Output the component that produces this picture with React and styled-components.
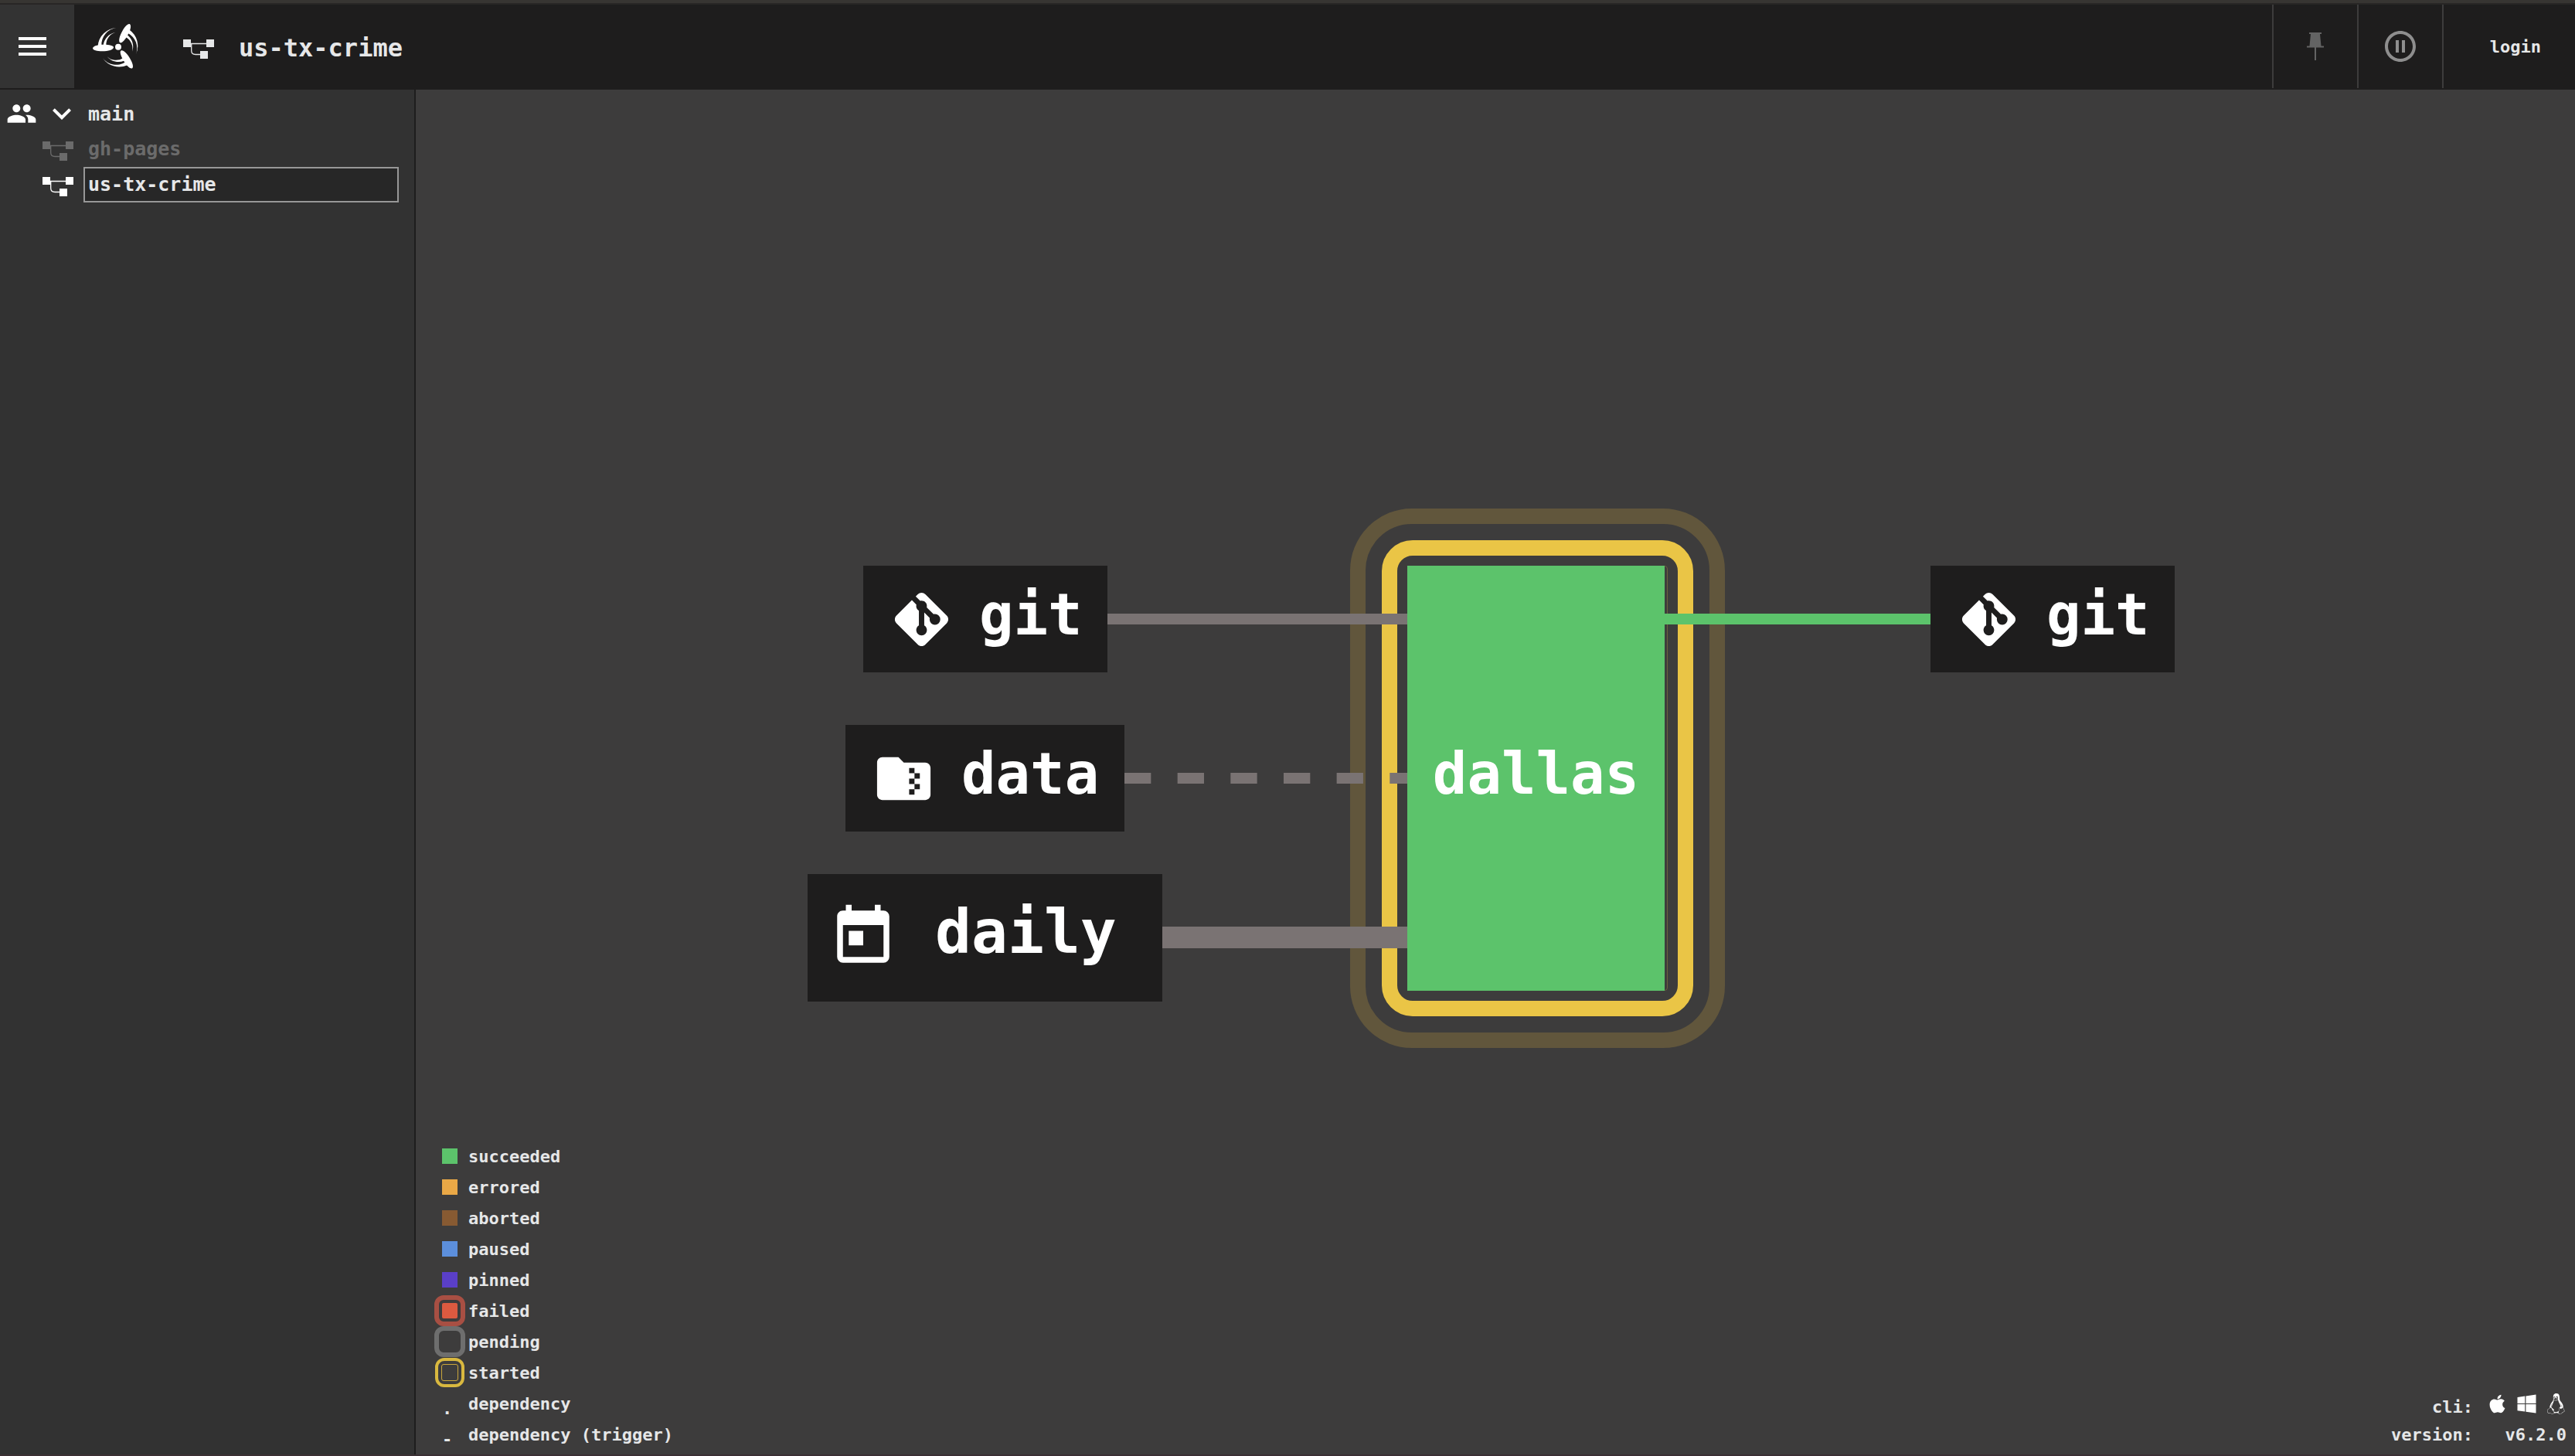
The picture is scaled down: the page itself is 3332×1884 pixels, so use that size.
import React from "react";
import styled, { createGlobalStyle } from "styled-components";
import { MdMenu, MdPeople, MdExpandMore, MdPauseCircleOutline } from "react-icons/md";
import { FaApple, FaLinux } from "react-icons/fa";

const color = {
  bar: "#1e1d1d",
  canvas: "#3d3c3c",
  sidebar: "#323232",
  text: "#e6e7e8",
  succeeded: "#5cc36b",
  started: "#eac546",
  edge: "#7a7373",
};

const GlobalStyle = createGlobalStyle`
  * { box-sizing: border-box; }
  body {
    margin: 0;
    background: ${color.canvas};
    color: ${color.text};
    font-family: "DejaVu Sans Mono", monospace;
    font-weight: 700;
  }
  a { color: inherit; text-decoration: none; }
  svg { display: block; flex: none; }
`;

const Page = styled.div`
  display: flex;
  flex-direction: column;
  height: 100vh;
  border-bottom: 2px solid #3b3034;
`;

const WindowEdge = styled.div`
  height: 6px;
  background: #373532;
  border-bottom: 2px solid #282625;
`;

const TopBar = styled.header`
  display: flex;
  height: 110px;
  background: ${color.bar};
  border-bottom: 2px solid ${color.bar};
`;

const MenuButton = styled.button`
  display: flex;
  align-items: center;
  width: 96px;
  padding: 0 18px;
  border: 0;
  background: #333333;
  color: #ffffff;
`;

const LogoLink = styled.a`
  display: flex;
  align-items: center;
  padding: 0 23px;
`;

const Breadcrumb = styled.a`
  display: flex;
  align-items: center;
  gap: 31px;
  padding: 3px 0 0 33px;
  font-size: 32px;
  line-height: 40px;
`;

const Actions = styled.div`
  display: flex;
  margin-left: auto;
`;

const ActionButton = styled.button`
  display: flex;
  align-items: center;
  justify-content: center;
  width: 110px;
  padding: 0;
  border: 0;
  border-left: 2px solid #3d3c3c;
  background: transparent;
  color: ${(p) => p.$tone};
`;

const LoginLink = styled.a`
  display: flex;
  align-items: center;
  padding: 0 44px 0 60px;
  border-left: 2px solid #3d3c3c;
  font-size: 22px;
`;

const Body = styled.div`
  display: flex;
  flex: 1;
  min-height: 0;
`;

const Sidebar = styled.nav`
  flex: none;
  width: 538px;
  padding: 8px 20px 0 8px;
  background: ${color.sidebar};
  border-right: 2px solid ${color.bar};
  font-size: 25px;
`;

const TeamButton = styled.button`
  display: flex;
  align-items: center;
  gap: 8px;
  height: 46px;
  padding: 0;
  border: 0;
  background: transparent;
  color: #ffffff;
  font: inherit;
`;

const TeamName = styled.span`
  margin-left: 2px;
  color: ${color.text};
`;

const PipelineList = styled.ul`
  margin: 0;
  padding: 0 0 0 47px;
  list-style: none;
`;

const PipelineLink = styled.a`
  display: flex;
  align-items: center;
  gap: 12px;
  color: ${(p) => (p.$dim ? "#6b6b6b" : "#ffffff")};
`;

const PipelineName = styled.span`
  flex: 1;
  height: 46px;
  padding: 0 4px;
  border: 2px solid ${(p) => (p.$selected ? "#979797" : "transparent")};
  background: ${(p) => (p.$selected ? "#272727" : "transparent")};
  color: ${(p) => (p.$dim ? "#6b6b6b" : color.text)};
  line-height: 42px;
`;

const Canvas = styled.main`
  position: relative;
  display: flex;
  align-items: center;
  justify-content: center;
  flex: 1;
  padding-top: 2px;
  background: ${color.canvas};
`;

const Graph = styled.div`
  position: relative;
  width: 1780px;
  height: 712px;
`;

const Placed = styled.div`
  position: absolute;
  left: ${(p) => p.$x}px;
  top: ${(p) => p.$y}px;
  width: ${(p) => p.$w}px;
  height: ${(p) => p.$h}px;
`;

const Ring = styled(Placed)`
  border: ${(p) => p.$line}px solid ${(p) => p.$tone};
  border-radius: ${(p) => p.$r}px;
`;

const Edges = styled.svg`
  position: absolute;
  inset: 0;
`;

const Resource = styled(Placed)`
  display: flex;
  align-items: center;
  gap: ${(p) => (p.$large ? 48 : 33)}px;
  padding: ${(p) => (p.$large ? "0 0 4px 27px" : "0 0 0 34px")};
  background: ${color.bar};
  color: #ffffff;
  font-size: ${(p) => (p.$large ? 78 : 74)}px;
`;

const Job = styled(Placed)`
  display: flex;
  align-items: center;
  justify-content: center;
  background: ${color.succeeded};
  color: #ffffff;
  font-size: 74px;
`;

const NodeLabel = styled.span`
  padding-bottom: 12px;
`;

const Legend = styled.dl`
  position: absolute;
  left: 34px;
  bottom: 6px;
  margin: 0;
  font-size: 22px;
`;

const LegendRow = styled.div`
  display: flex;
  align-items: center;
  gap: 14px;
  height: 40px;
`;

const LegendKey = styled.dt`
  display: flex;
  align-items: center;
  justify-content: center;
  width: 20px;
  height: 40px;
`;

const Swatch = styled.span`
  width: 20px;
  height: 20px;
  background: ${(p) => p.$fill};
`;

const SwatchRing = styled.span`
  display: flex;
  flex: none;
  align-items: center;
  justify-content: center;
  width: ${(p) => p.$size}px;
  height: ${(p) => p.$size}px;
  border: ${(p) => p.$line}px solid ${(p) => p.$tone};
  border-radius: 12px;
`;

const SwatchCore = styled.span`
  width: 22px;
  height: 22px;
  border: 1px solid ${(p) => p.$outline || "transparent"};
  border-radius: 3px;
  background: ${(p) => p.$fill || "transparent"} content-box;
`;

const LineGlyph = styled.span`
  width: 20px;
  padding-top: 13px;
`;

const LegendText = styled.dd`
  margin: 0;
`;

const Info = styled.div`
  position: absolute;
  right: 11px;
  bottom: 7px;
  display: grid;
  grid-template-columns: auto auto;
  column-gap: 18px;
  justify-items: end;
  align-items: center;
  font-size: 22px;
  line-height: 36px;
`;

const Downloads = styled.div`
  display: flex;
  gap: 11px;
  height: 36px;
  color: #ffffff;
`;

const Logo = () => (
  <svg width="62" height="62" viewBox="57 57 186 186" fill="#ffffff" aria-hidden="true">
    <circle cx="159" cy="152" r="12" />
    {[0, 120, 240].map((turn) => (
      <g key={turn} transform={`rotate(${turn} 159 152)`}>
        <path d="M60 157C62 148 80 143 102 143C124 143 141 147 141 154C141 163 120 169 97 169C76 169 60 165 60 157Z" />
        <path d="M80 148A77 77 0 0 1 151 78A66 66 0 0 0 94 146Z" />
        <path d="M101 146A57 57 0 0 1 148 96A50 50 0 0 0 112 146Z" />
      </g>
    ))}
  </svg>
);

const PipelineIcon = () => (
  <svg width="41" height="29" viewBox="0 0 41 29" fill="currentColor" aria-hidden="true">
    <rect x="0" y="4" width="10" height="10" />
    <rect x="30" y="4" width="10" height="10" />
    <rect x="22" y="19" width="10" height="10" />
    <path
      d="M10 9.5H30M10.700 10V18.500Q10.700 23.500 16 23.500H23"
      fill="none"
      stroke="currentColor"
      strokeWidth="1.300"
    />
  </svg>
);

const PinIcon = () => (
  <svg width="24" height="36" viewBox="0 0 24 36" fill="currentColor" aria-hidden="true">
    <path d="M4 0H20V2H18L19.500 17.500H23V19.500H13V36H11V19.500H1V17.500H4.500L6 2H4Z" />
  </svg>
);

const WindowsIcon = () => (
  <svg width="27" height="27" viewBox="-1.500 -1.500 27 27" fill="currentColor" aria-hidden="true">
    <path d="M0 3.450L9.750 2.100V11.500H0M10.900 1.950L24 0V11.500H10.900M0 12.600H9.750V22L0 20.700M10.900 12.600H24V24L10.900 22.200" />
  </svg>
);

const glyphs = {
  git: "M2.6 10.590L8.380 4.800L10.070 6.500C9.830 7.350 10.220 8.280 11 8.730V14.270C10.400 14.610 10 15.260 10 16A2 2 0 0 0 12 18A2 2 0 0 0 14 16C14 15.260 13.600 14.610 13 14.270V9.410L15.070 11.500C15 11.650 15 11.820 15 12A2 2 0 0 0 17 14A2 2 0 0 0 19 12A2 2 0 0 0 17 10C16.820 10 16.650 10 16.500 10.070L13.930 7.500C14.190 6.570 13.710 5.550 12.780 5.160C12.350 5 11.900 4.960 11.500 5.070L9.800 3.380L10.590 2.600C11.370 1.810 12.630 1.810 13.410 2.600L21.400 10.590C22.190 11.370 22.190 12.630 21.400 13.410L13.410 21.400C12.630 22.190 11.370 22.190 10.590 21.400L2.600 13.410C1.810 12.630 1.810 11.370 2.600 10.590Z",
  folder:
    "M20 6H12L10 4H4C2.900 4 2 4.900 2 6V18C2 19.100 2.900 20 4 20H20C21.100 20 22 19.100 22 18V8C22 6.900 21.100 6 20 6M18 12H16V14H18V16H16V18H14V16H16V14H14V12H16V10H14V8H16V10H18V12Z",
  calendar:
    "M7 10H12V15H7M19 19H5V8H19M19 3H18V1H16V3H8V1H6V3H5C3.890 3 3 3.900 3 5V19A2 2 0 0 0 5 21H19A2 2 0 0 0 21 19V5A2 2 0 0 0 19 3Z",
};

const Glyph = ({ name, size }) => (
  <svg width={size} height={size} viewBox="0 0 24 24" fill="currentColor" aria-hidden="true">
    <path d={glyphs[name]} />
  </svg>
);

const resources = [
  { id: "git-in", label: "git", icon: "git", x: 72, y: 88, w: 316, h: 138 },
  { id: "data", label: "data", icon: "folder", x: 49, y: 294, w: 361, h: 138 },
  { id: "daily", label: "daily", icon: "calendar", x: 0, y: 487, w: 459, h: 165, large: true },
  { id: "git-out", label: "git", icon: "git", x: 1453, y: 88, w: 316, h: 138 },
];

const legend = [
  { label: "succeeded", key: <Swatch $fill="#5cc36b" /> },
  { label: "errored", key: <Swatch $fill="#eaa846" /> },
  { label: "aborted", key: <Swatch $fill="#875a32" /> },
  { label: "paused", key: <Swatch $fill="#5c8fdc" /> },
  { label: "pinned", key: <Swatch $fill="#5a3fc8" /> },
  {
    label: "failed",
    key: (
      <SwatchRing $size={40} $line={6} $tone="#a84f43">
        <SwatchCore $fill="#db5a40" />
      </SwatchRing>
    ),
  },
  { label: "pending", key: <SwatchRing $size={40} $line={6} $tone="#6e6e6e" /> },
  {
    label: "started",
    key: (
      <SwatchRing $size={38} $line={4} $tone="#d9b83f">
        <SwatchCore $outline="#c9a63c" />
      </SwatchRing>
    ),
  },
  { label: "dependency", key: <LineGlyph>.</LineGlyph> },
  { label: "dependency (trigger)", key: <LineGlyph>-</LineGlyph> },
];

const pipelines = [
  { name: "gh-pages", dim: true },
  { name: "us-tx-crime", selected: true },
];

export default function App() {
  return (
    <Page>
      <GlobalStyle />
      <WindowEdge />
      <TopBar>
        <MenuButton aria-label="Toggle sidebar">
          <MdMenu size={48} />
        </MenuButton>
        <LogoLink href="#home" aria-label="Dashboard">
          <Logo />
        </LogoLink>
        <Breadcrumb href="#pipeline">
          <PipelineIcon />
          us-tx-crime
        </Breadcrumb>
        <Actions>
          <ActionButton $tone="#636363" aria-label="Pin">
            <PinIcon />
          </ActionButton>
          <ActionButton $tone="#8e8e8e" aria-label="Pause pipeline">
            <MdPauseCircleOutline size={48} />
          </ActionButton>
          <LoginLink href="#login">login</LoginLink>
        </Actions>
      </TopBar>
      <Body>
        <Sidebar>
          <TeamButton>
            <MdPeople size={40} />
            <MdExpandMore size={48} />
            <TeamName>main</TeamName>
          </TeamButton>
          <PipelineList>
            {pipelines.map((p) => (
              <li key={p.name}>
                <PipelineLink href={`#${p.name}`} $dim={p.dim}>
                  <PipelineIcon />
                  <PipelineName $dim={p.dim} $selected={p.selected}>
                    {p.name}
                  </PipelineName>
                </PipelineLink>
              </li>
            ))}
          </PipelineList>
        </Sidebar>
        <Canvas>
          <Graph>
            <Ring $x={702} $y={14} $w={485} $h={698} $line={20} $r={80} $tone="#61563c" />
            <Ring $x={743} $y={55} $w={403} $h={616} $line={20} $r={40} $tone={color.started} />
            <Ring $x={776} $y={88} $w={337} $h={550} $line={1} $r={4} $tone="#6b603e" />
            <Edges width="1780" height="712" viewBox="0 0 1780 712" fill="none" aria-hidden="true">
              <path d="M388 157H776" stroke={color.edge} strokeWidth="14" />
              <path d="M410 363H776" stroke={color.edge} strokeWidth="14" strokeDasharray="34.330" />
              <path d="M459 569H776" stroke={color.edge} strokeWidth="28" />
              <path d="M1109 157H1453" stroke={color.succeeded} strokeWidth="14" />
            </Edges>
            {resources.map((r) => (
              <Resource
                as="a"
                href={`#${r.id}`}
                key={r.id}
                $x={r.x}
                $y={r.y}
                $w={r.w}
                $h={r.h}
                $large={r.large}
              >
                <Glyph name={r.icon} size={r.large ? 90 : 83} />
                <NodeLabel>{r.label}</NodeLabel>
              </Resource>
            ))}
            <Job as="a" href="#dallas" $x={776} $y={88} $w={333} $h={550}>
              <NodeLabel>dallas</NodeLabel>
            </Job>
          </Graph>
          <Legend>
            {legend.map((item) => (
              <LegendRow key={item.label}>
                <LegendKey>{item.key}</LegendKey>
                <LegendText>{item.label}</LegendText>
              </LegendRow>
            ))}
          </Legend>
          <Info>
            <span>cli:</span>
            <Downloads>
              <a href="#darwin" aria-label="Download for macOS">
                <FaApple size={27} />
              </a>
              <a href="#windows" aria-label="Download for Windows">
                <WindowsIcon />
              </a>
              <a href="#linux" aria-label="Download for Linux">
                <FaLinux size={27} />
              </a>
            </Downloads>
            <span>version:</span>
            <span>v6.2.0</span>
          </Info>
        </Canvas>
      </Body>
    </Page>
  );
}
